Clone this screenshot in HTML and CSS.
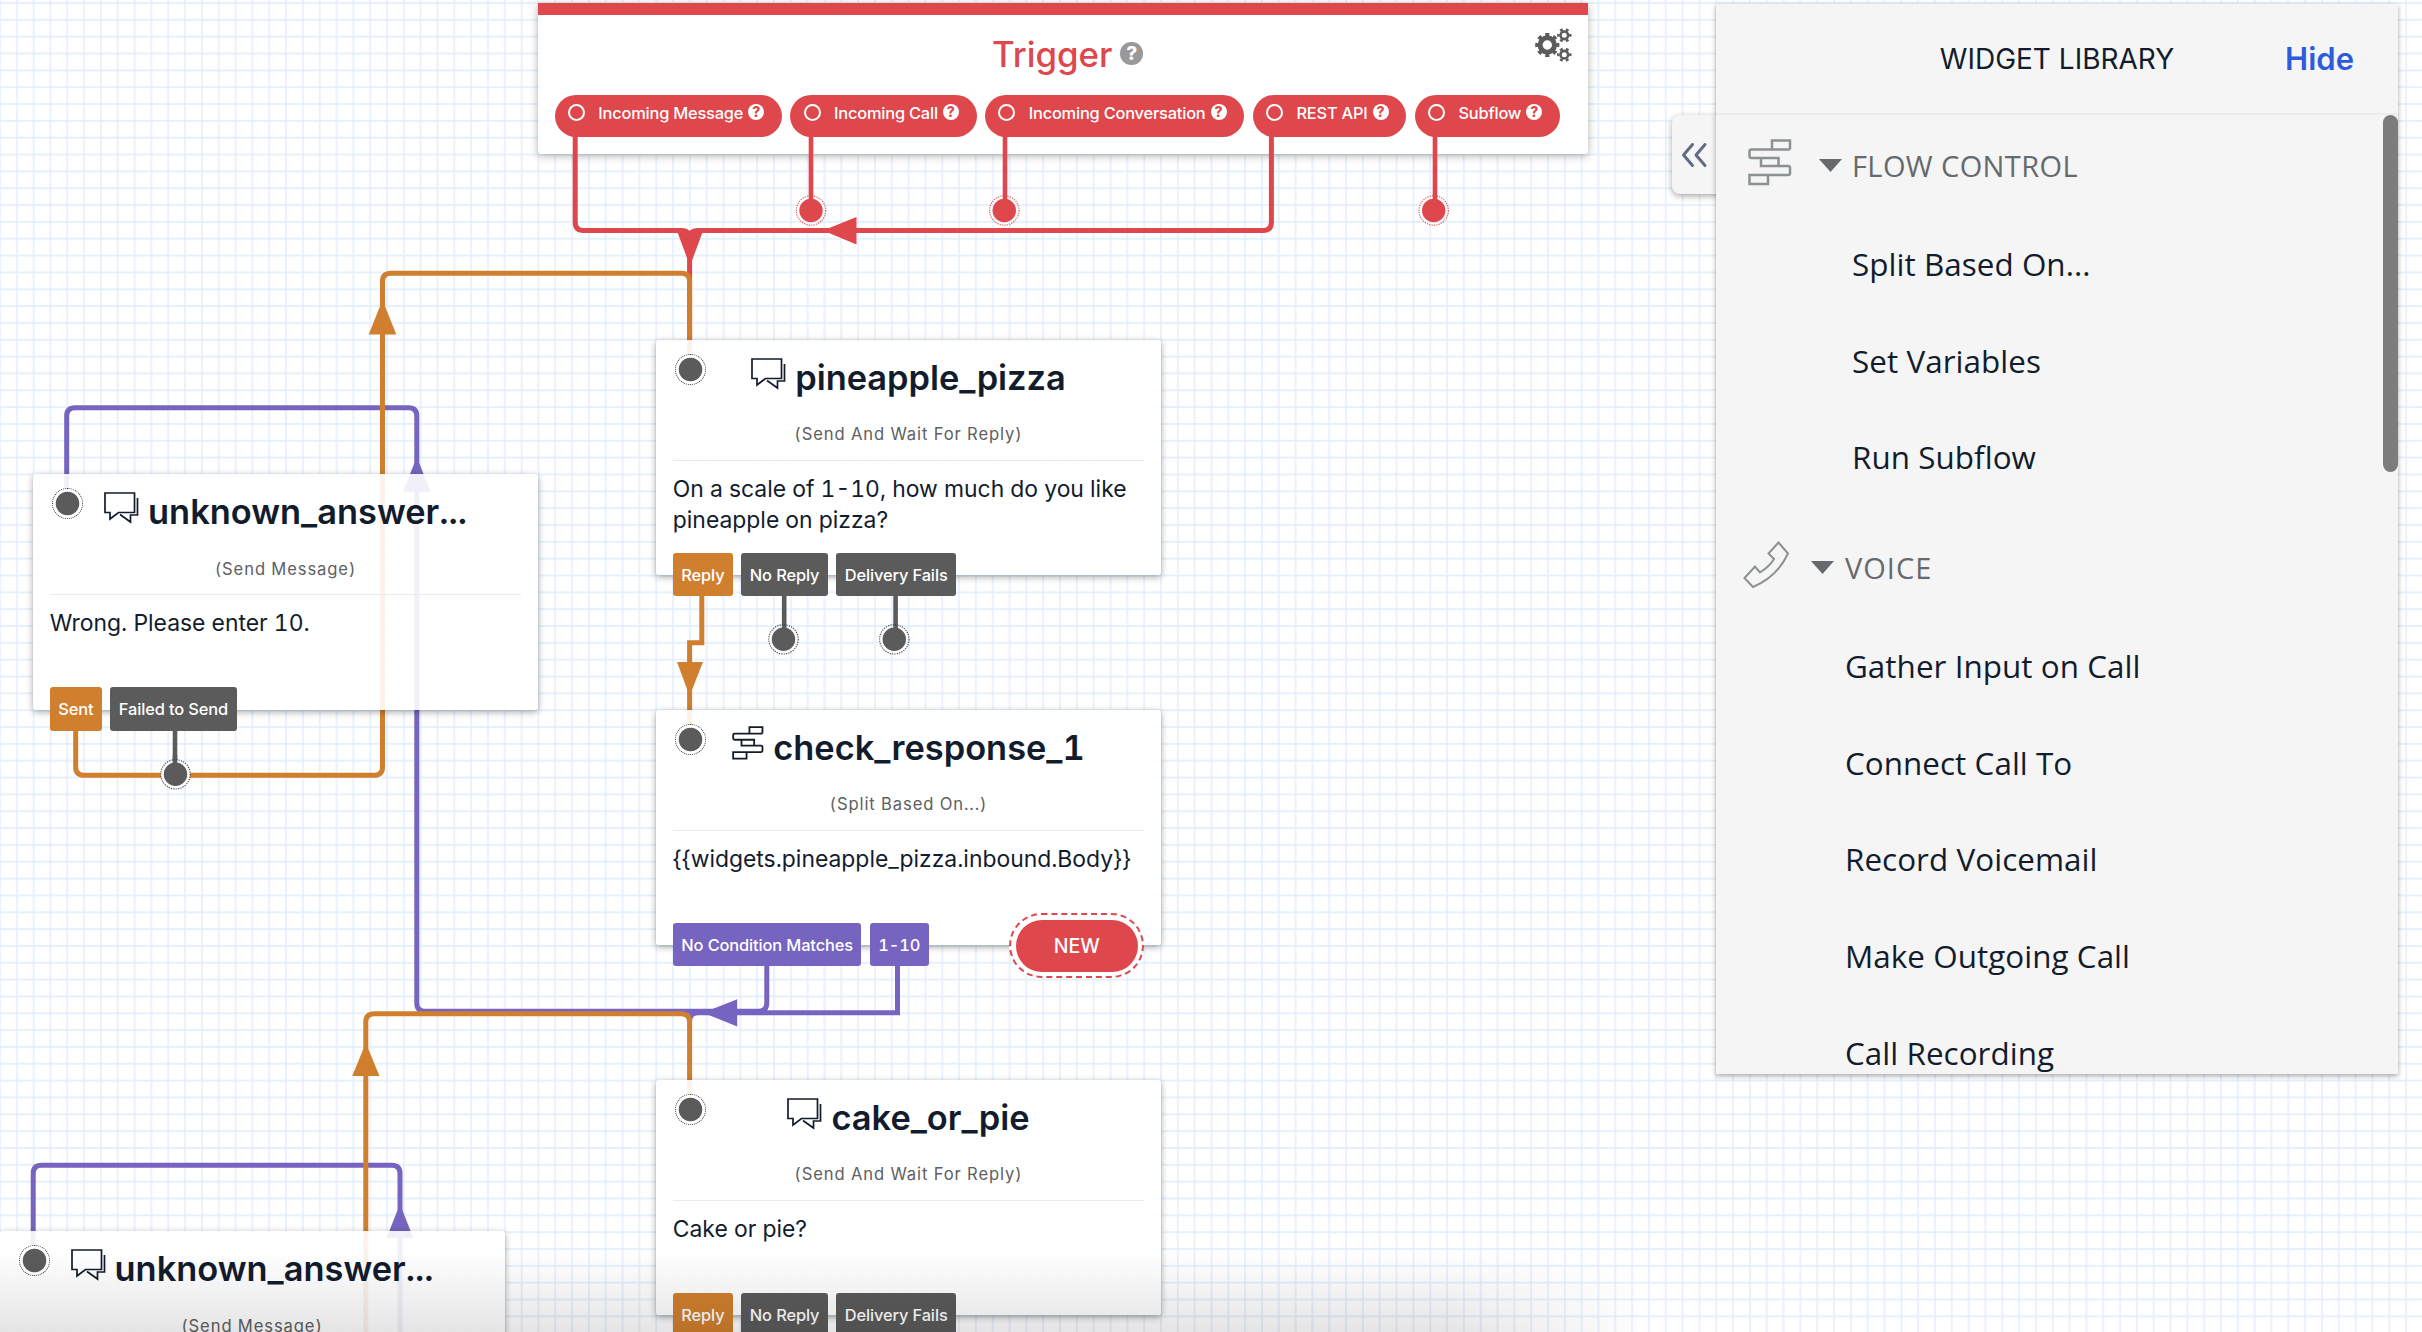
FILE: index.html
```
<!DOCTYPE html>
<html lang="en">
<head>
<meta charset="utf-8">
<title>Flow editor</title>
<link rel="stylesheet" href="styles.css">
</head>
<body>
<svg class="sprites" aria-hidden="true">
  <defs>
    <symbol id="chat" viewBox="0 0 35 32">
      <path d="M1 1H30.500V20.500H14.500L6 27V20.500H1Z M33.500 6V23H26.500V30L16 22.500" fill="none" stroke="currentColor" stroke-width="1.700"/>
    </symbol>
    <symbol id="split" viewBox="0 0 44 47">
      <path d="M24 10.500V1.500H42V10.500 M42 10.500H3.500Q1.500 10.500 1.500 12.500V17Q1.500 19 3.500 19H30.500V27 M13 19V27H40Q42 27 42 29V34Q42 36 40 36H1.500V45H20V36" fill="none" stroke="currentColor" stroke-width="2.500"/>
    </symbol>
    <symbol id="phone" viewBox="0 0 47 48">
      <path d="M35.500 1.500L45 12.500Q34 36 10 46L1.500 37L12 25.500L17 31.500Q27 25 31 18L25.500 12.500Z" fill="none" stroke="currentColor" stroke-width="2"/>
    </symbol>
    <symbol id="gears" viewBox="0 0 37 35">
      <g fill="none" stroke="currentColor">
        <circle cx="12.300" cy="17" r="7.200" stroke-width="5"/>
        <circle cx="12.300" cy="17" r="10.500" stroke-width="3.200" pathLength="80" stroke-dasharray="5 5" stroke-dashoffset="2.500"/>
        <circle cx="29.300" cy="7.300" r="3.800" stroke-width="2.600"/>
        <circle cx="29.300" cy="7.300" r="6" stroke-width="2.400" pathLength="60" stroke-dasharray="4.500 5.500" stroke-dashoffset="2.250"/>
        <circle cx="29.300" cy="26.700" r="3.800" stroke-width="2.600"/>
        <circle cx="29.300" cy="26.700" r="6" stroke-width="2.400" pathLength="60" stroke-dasharray="4.500 5.500" stroke-dashoffset="2.250"/>
      </g>
    </symbol>
  </defs>
</svg>

<main class="canvas">
  <svg class="layer" width="2422" height="1332">
    <defs>
      <pattern id="grid" x="0" y="3" width="16.826" height="16.838" patternUnits="userSpaceOnUse">
        <path class="grid-line" d="M0 0H16.826M0 16.838H16.826M0 0V16.838M16.826 0V16.838"/>
      </pattern>
    </defs>
    <rect width="2422" height="1332" fill="url(#grid)"/>
  </svg>

  <section class="trigger">
    <div class="trigger-head">
      <h1 class="trigger-title">Trigger</h1><span class="help help-lg">?</span>
      <svg class="trigger-gears"><use href="#gears"/></svg>
    </div>
    <div class="pills">
      <span class="pill"><i class="radio"></i><span class="pill-text">Incoming Message</span><span class="help">?</span></span>
      <span class="pill"><i class="radio"></i><span class="pill-text">Incoming Call</span><span class="help">?</span></span>
      <span class="pill"><i class="radio"></i><span class="pill-text">Incoming Conversation</span><span class="help">?</span></span>
      <span class="pill"><i class="radio"></i><span class="pill-text">REST API</span><span class="help">?</span></span>
      <span class="pill"><i class="radio"></i><span class="pill-text">Subflow</span><span class="help">?</span></span>
    </div>
  </section>

  <svg class="layer" width="2422" height="1332">
    <g class="wire purple">
      <path d="M766.800 965V1003Q766.800 1011.300 758.500 1011.300H425Q416.800 1011.300 416.800 1003V416Q416.800 407.700 408.500 407.700H75Q66.700 407.700 66.700 416V504"/>
      <path d="M897.500 965V1012.700H698Q689.600 1012.700 689.600 1021"/>
      <path d="M400 1340V1173.500Q400 1165.200 391.700 1165.200H41.500Q33.200 1165.200 33.200 1173.500V1260"/>
    </g>
    <g class="wire red">
      <path d="M575.200 130V222Q575.200 230.500 583.500 230.500H681.500Q689.600 230.500 689.600 239V340"/>
      <path d="M1271.400 130V222Q1271.400 230.500 1263 230.500H698Q689.600 230.500 689.600 239"/>
      <path class="stub" d="M811 130V200M1005 130V200M1435 130V200"/>
    </g>
    <g class="wire orange">
      <path d="M75.700 725V767Q75.700 775.300 84 775.300H374.200Q382.500 775.300 382.500 767V281.500Q382.500 273.300 390.800 273.300H681.300Q689.600 273.300 689.600 281.500V369"/>
      <path d="M701.800 590V642.700H689.600V739"/>
      <path d="M365.800 1340V1022Q365.800 1013.700 374.100 1013.700H681.300Q689.600 1013.700 689.600 1022V1109"/>
    </g>
    <path class="wire gray stub" d="M784.200 590V632M895.600 590V632M175 725V766"/>
    <path class="arrow red" d="M677 231H703L690 266Z"/>
    <path class="arrow red" d="M856.500 217V244.500L823 230.500Z"/>
    <path class="arrow orange" d="M368.700 334.500H396.300L382.500 300Z"/>
    <path class="arrow orange" d="M677 662H703L689.600 696Z"/>
    <path class="arrow orange" d="M352.200 1076H379.500L365.800 1043Z"/>
    <path class="arrow purple" d="M403 491.700H430.700L416.800 457Z"/>
    <path class="arrow purple" d="M386.500 1238H413.300L400 1204Z"/>
    <path class="arrow purple" d="M737.200 999.200V1026.500L703 1012.700Z"/>
    <g class="dot red"><circle cx="811" cy="210.500" r="11.700"/><circle cx="1004.300" cy="210.500" r="11.700"/><circle cx="1433.700" cy="210.500" r="11.700"/></g>
    <g class="dot gray"><circle cx="783.500" cy="639.300" r="11.700"/><circle cx="894.300" cy="639.300" r="11.700"/></g>
    <g class="ring red"><circle cx="811" cy="210.500" r="14.700"/><circle cx="1004.300" cy="210.500" r="14.700"/><circle cx="1433.700" cy="210.500" r="14.700"/></g>
    <g class="ring gray"><circle cx="783.500" cy="639.300" r="14.700"/><circle cx="894.300" cy="639.300" r="14.700"/></g>
    <circle class="halo" cx="175.500" cy="774.300" r="14.700"/>
    <path class="wire gray stub" d="M175 755V766"/>
    <g class="dot gray"><circle cx="175.500" cy="774.300" r="11.700"/></g>
    <g class="ring gray"><circle cx="175.500" cy="774.300" r="14.700"/></g>
  </svg>

  <article class="card card-a">
    <span class="port"></span>
    <h2 class="card-title"><svg class="chat"><use href="#chat"/></svg><span>unknown_answer...</span></h2>
    <p class="card-kind">(Send Message)</p>
    <p class="card-body">Wrong. Please enter 10.</p>
    <div class="chips"><span class="chip orange">Sent</span><span class="chip">Failed to Send</span></div>
  </article>

  <article class="card card-b">
    <span class="port"></span>
    <h2 class="card-title"><svg class="chat"><use href="#chat"/></svg><span>pineapple_pizza</span></h2>
    <p class="card-kind">(Send And Wait For Reply)</p>
    <p class="card-body">On a scale of 1-10, how much do you like<br>pineapple on pizza?</p>
    <div class="chips"><span class="chip orange">Reply</span><span class="chip">No Reply</span><span class="chip">Delivery Fails</span></div>
  </article>

  <article class="card card-c">
    <span class="port"></span>
    <h2 class="card-title"><svg class="split"><use href="#split"/></svg><span>check_response_1</span></h2>
    <p class="card-kind">(Split Based On...)</p>
    <p class="card-body">{{widgets.pineapple_pizza.inbound.Body}}</p>
    <div class="chips"><span class="chip purple">No Condition Matches</span><span class="chip purple">1-10</span><span class="new"><span class="new-label">NEW</span></span></div>
  </article>

  <article class="card card-d">
    <span class="port"></span>
    <h2 class="card-title"><svg class="chat"><use href="#chat"/></svg><span>cake_or_pie</span></h2>
    <p class="card-kind">(Send And Wait For Reply)</p>
    <p class="card-body">Cake or pie?</p>
    <div class="chips"><span class="chip orange">Reply</span><span class="chip">No Reply</span><span class="chip">Delivery Fails</span></div>
  </article>

  <article class="card card-e">
    <span class="port"></span>
    <h2 class="card-title"><svg class="chat"><use href="#chat"/></svg><span>unknown_answer...</span></h2>
    <p class="card-kind">(Send Message)</p>
  </article>

  <div class="fade"></div>

  <button class="tab" aria-label="Expand">
    <svg width="28" height="26" viewBox="0 0 28 26"><path d="M12.500 2.500L3.500 13L12.500 23.500M25 2.500L16 13L25 23.500" fill="none" stroke="currentColor" stroke-width="3" stroke-linecap="round" stroke-linejoin="round"/></svg>
  </button>
  <aside class="library">
    <header class="library-head"><span class="library-title">WIDGET LIBRARY</span><a class="hide">Hide</a></header>
    <div class="library-scroll">
      <div class="groups">
        <section class="group flow">
          <h3 class="group-title"><svg class="group-icon split-lg"><use href="#split"/></svg><svg class="caret" viewBox="0 0 27 16"><path d="M2 1H25L13.500 14Z"/></svg><span>FLOW CONTROL</span></h3>
          <ul class="items"><li>Split Based On...</li><li>Set Variables</li><li>Run Subflow</li></ul>
        </section>
        <section class="group voice">
          <h3 class="group-title"><svg class="group-icon phone"><use href="#phone"/></svg><svg class="caret" viewBox="0 0 27 16"><path d="M2 1H25L13.500 14Z"/></svg><span>VOICE</span></h3>
          <ul class="items"><li>Gather Input on Call</li><li>Connect Call To</li><li>Record Voicemail</li><li>Make Outgoing Call</li><li>Call Recording</li></ul>
        </section>
      </div>
      <div class="thumb"></div>
    </div>
  </aside>
</main>
</body>
</html>
```
FILE: styles.css
```
* { box-sizing: border-box; }
body { margin: 0; font-family: Inter, "Liberation Sans", sans-serif; color: #121c2d; background: #fff; }
h1, h2, h3, p, ul { margin: 0; padding: 0; font-weight: 400; }
ul { list-style: none; }
.sprites { position: absolute; width: 0; height: 0; }
.canvas { position: relative; width: 2422px; height: 1332px; overflow: hidden; }
.layer { position: absolute; left: 0; top: 0; }
.grid-line { stroke: #e0edfc; stroke-width: 1.4; fill: none; }

.wire { fill: none; stroke-width: 5; }
.stub { stroke-width: 4.6; }
.wire.red { stroke: #de474c; }
.wire.orange { stroke: #d07f2e; }
.wire.purple { stroke: #7664c0; }
.wire.gray { stroke: #5b5b5b; }
.arrow.red, .dot.red { fill: #de474c; }
.arrow.orange { fill: #d07f2e; }
.arrow.purple { fill: #7664c0; }
.dot.gray { fill: #5b5b5b; }
.ring { fill: none; stroke-width: 1.1; stroke-dasharray: 1.2 1.2; }
.ring.red { stroke: #de474c; }
.ring.gray { stroke: #3c3c3c; }
.halo { fill: #fff; }

.trigger { position: absolute; left: 538px; top: 3px; width: 1050px; height: 151px; border-top: 12.500px solid #de474c; border-radius: 0 0 3px 3px; background: #fff; box-shadow: 0 2px 8px rgba(0, 0, 0, .3); padding: 0 16.500px; }
.trigger-head { position: relative; display: flex; justify-content: center; align-items: center; gap: 8px; height: 80px; padding: 0 0 3px 9px; }
.trigger-title { font-size: 34.800px; font-weight: 500; color: #de474c; line-height: 44px; }
.trigger-gears { position: absolute; right: 0; top: 12.500px; width: 37px; height: 35px; color: #5b5b5b; }
.help { display: flex; justify-content: center; align-items: center; width: 16px; height: 16px; border-radius: 50%; background: #fff; color: #de474c; font-size: 14px; font-weight: 800; line-height: 1; }
.help-lg { width: 22.500px; height: 22.500px; background: #999; color: #fff; font-size: 19px; }
.pills { display: flex; gap: 8.300px; }
.pill { display: flex; align-items: center; height: 42px; padding: 0 17.800px 8px 13.500px; border-radius: 21px; background: #de474c; color: #fff; font-size: 16.400px; letter-spacing: -.2px; font-weight: 500; white-space: nowrap; }
.pill-text { padding-top: 2px; }
.radio { width: 17px; height: 17px; border: 2px solid #fff; border-radius: 50%; margin-right: 13.300px; }
.pill .help { margin-left: 5px; letter-spacing: 0; }

.card { position: absolute; width: 505px; height: 235.500px; padding: 0 16.800px; border-radius: 3px; background: rgba(255, 255, 255, .9); box-shadow: 0 2px 7px rgba(0, 0, 0, .35); display: flex; flex-direction: column; font-feature-settings: "tnum"; }
.card > * { flex: none; }
.card-a { left: 33px; top: 474px; }
.card-b { left: 656px; top: 339.500px; }
.card-c { left: 656px; top: 709.500px; }
.card-d { left: 656px; top: 1079.500px; }
.card-e { left: -.5px; top: 1231px; }
.port { position: absolute; left: 19px; top: 14px; width: 31px; height: 31px; border-radius: 50%; border: 1.200px dotted #3c3c3c; background: radial-gradient(circle, #5b5b5b 11.300px, #fff 12.200px); }
.card-title { display: flex; justify-content: center; height: 82.500px; padding-top: 15px; font-size: 34.400px; font-weight: 600; line-height: 45px; }
.chat { width: 35px; height: 32px; margin: 3px 9px 0 0; }
.split { width: 32px; height: 34px; margin: 1px 9px 0 0; }
.card-kind { display: flex; justify-content: center; height: 38.500px; border-bottom: 1.700px solid #ebebeb; font-size: 16.600px; line-height: 24px; letter-spacing: .9px; color: #606060; }
.card-body { padding-top: 13px; height: 92px; font-size: 22.900px; line-height: 31px; white-space: nowrap; }
.chips { display: flex; gap: 8.300px; height: 43.500px; }
.chip { display: flex; align-items: center; height: 43.500px; padding: 1px 8.500px 0; border-radius: 3px; background: #5b5b5b; color: #fff; font-size: 16.400px; letter-spacing: -.12px; font-weight: 500; }
.chip.orange { background: #d07f2e; }
.chip.purple { background: #7664c0; }
.new { display: flex; margin: -9.500px 0 0 auto; width: 135px; height: 65px; padding: 4.500px; border: 2px dashed #de474c; border-radius: 33px; background: #fff; }
.new-label { flex: 1; display: flex; justify-content: center; align-items: center; border-radius: 26px; background: #de474c; color: #fff; font-size: 19.500px; font-weight: 500; }
.fade { position: absolute; left: 0; width: 1650px; bottom: 0; height: 80px; background: linear-gradient(rgba(0, 0, 0, 0), rgba(0, 0, 0, .1)); -webkit-mask-image: linear-gradient(90deg, #000 88%, transparent); mask-image: linear-gradient(90deg, #000 88%, transparent); }

.tab { position: absolute; left: 1672px; top: 115px; width: 50px; height: 79px; padding: 0 0 0 8px; border: 0; border-radius: 8px 0 0 8px; background: #f5f5f5; color: #606b85; box-shadow: 0 2px 6px rgba(0, 0, 0, .35); display: flex; align-items: center; }
.library { position: absolute; left: 1716px; top: 4px; width: 682px; height: 1070px; background: #f5f5f5; box-shadow: 0 2px 5px rgba(0, 0, 0, .35); display: flex; flex-direction: column; overflow: hidden; }
.library-head { display: flex; align-items: center; height: 111px; flex: none; border-bottom: 2px solid #ececec; position: relative; justify-content: center; }
.library-title { font-size: 28px; }
.hide { position: absolute; right: 44px; font-size: 31px; font-weight: 600; color: #2e5bdc; }
.library-scroll { display: flex; flex: 1; min-height: 0; font-family: "Open Sans", "Noto Sans", sans-serif; }
.groups { flex: 1; }
.thumb { width: 15px; height: 357px; border-radius: 8px; background: #7c7c7c; }
.group-title { display: flex; align-items: center; height: 101px; font-size: 29px; letter-spacing: .4px; color: #666a6c; }
.group-icon { color: #8c9193; }
.split-lg { width: 44px; height: 47px; margin: -6px 25px 0 32px; }
.phone { width: 47px; height: 48px; margin: -6px 19px 0 27px; }
.caret { width: 27px; height: 16px; margin-right: 8px; fill: #666a6c; }
.voice .group-title { letter-spacing: 1px; }
.voice .caret { margin-right: 9px; }
.items li { height: 96.600px; line-height: 96.600px; font-size: 31.400px; letter-spacing: .05px; white-space: nowrap; }
.flow { margin-bottom: 11.500px; }
.flow .items { padding-left: 136px; }
.voice .items { padding-left: 129px; }
```
